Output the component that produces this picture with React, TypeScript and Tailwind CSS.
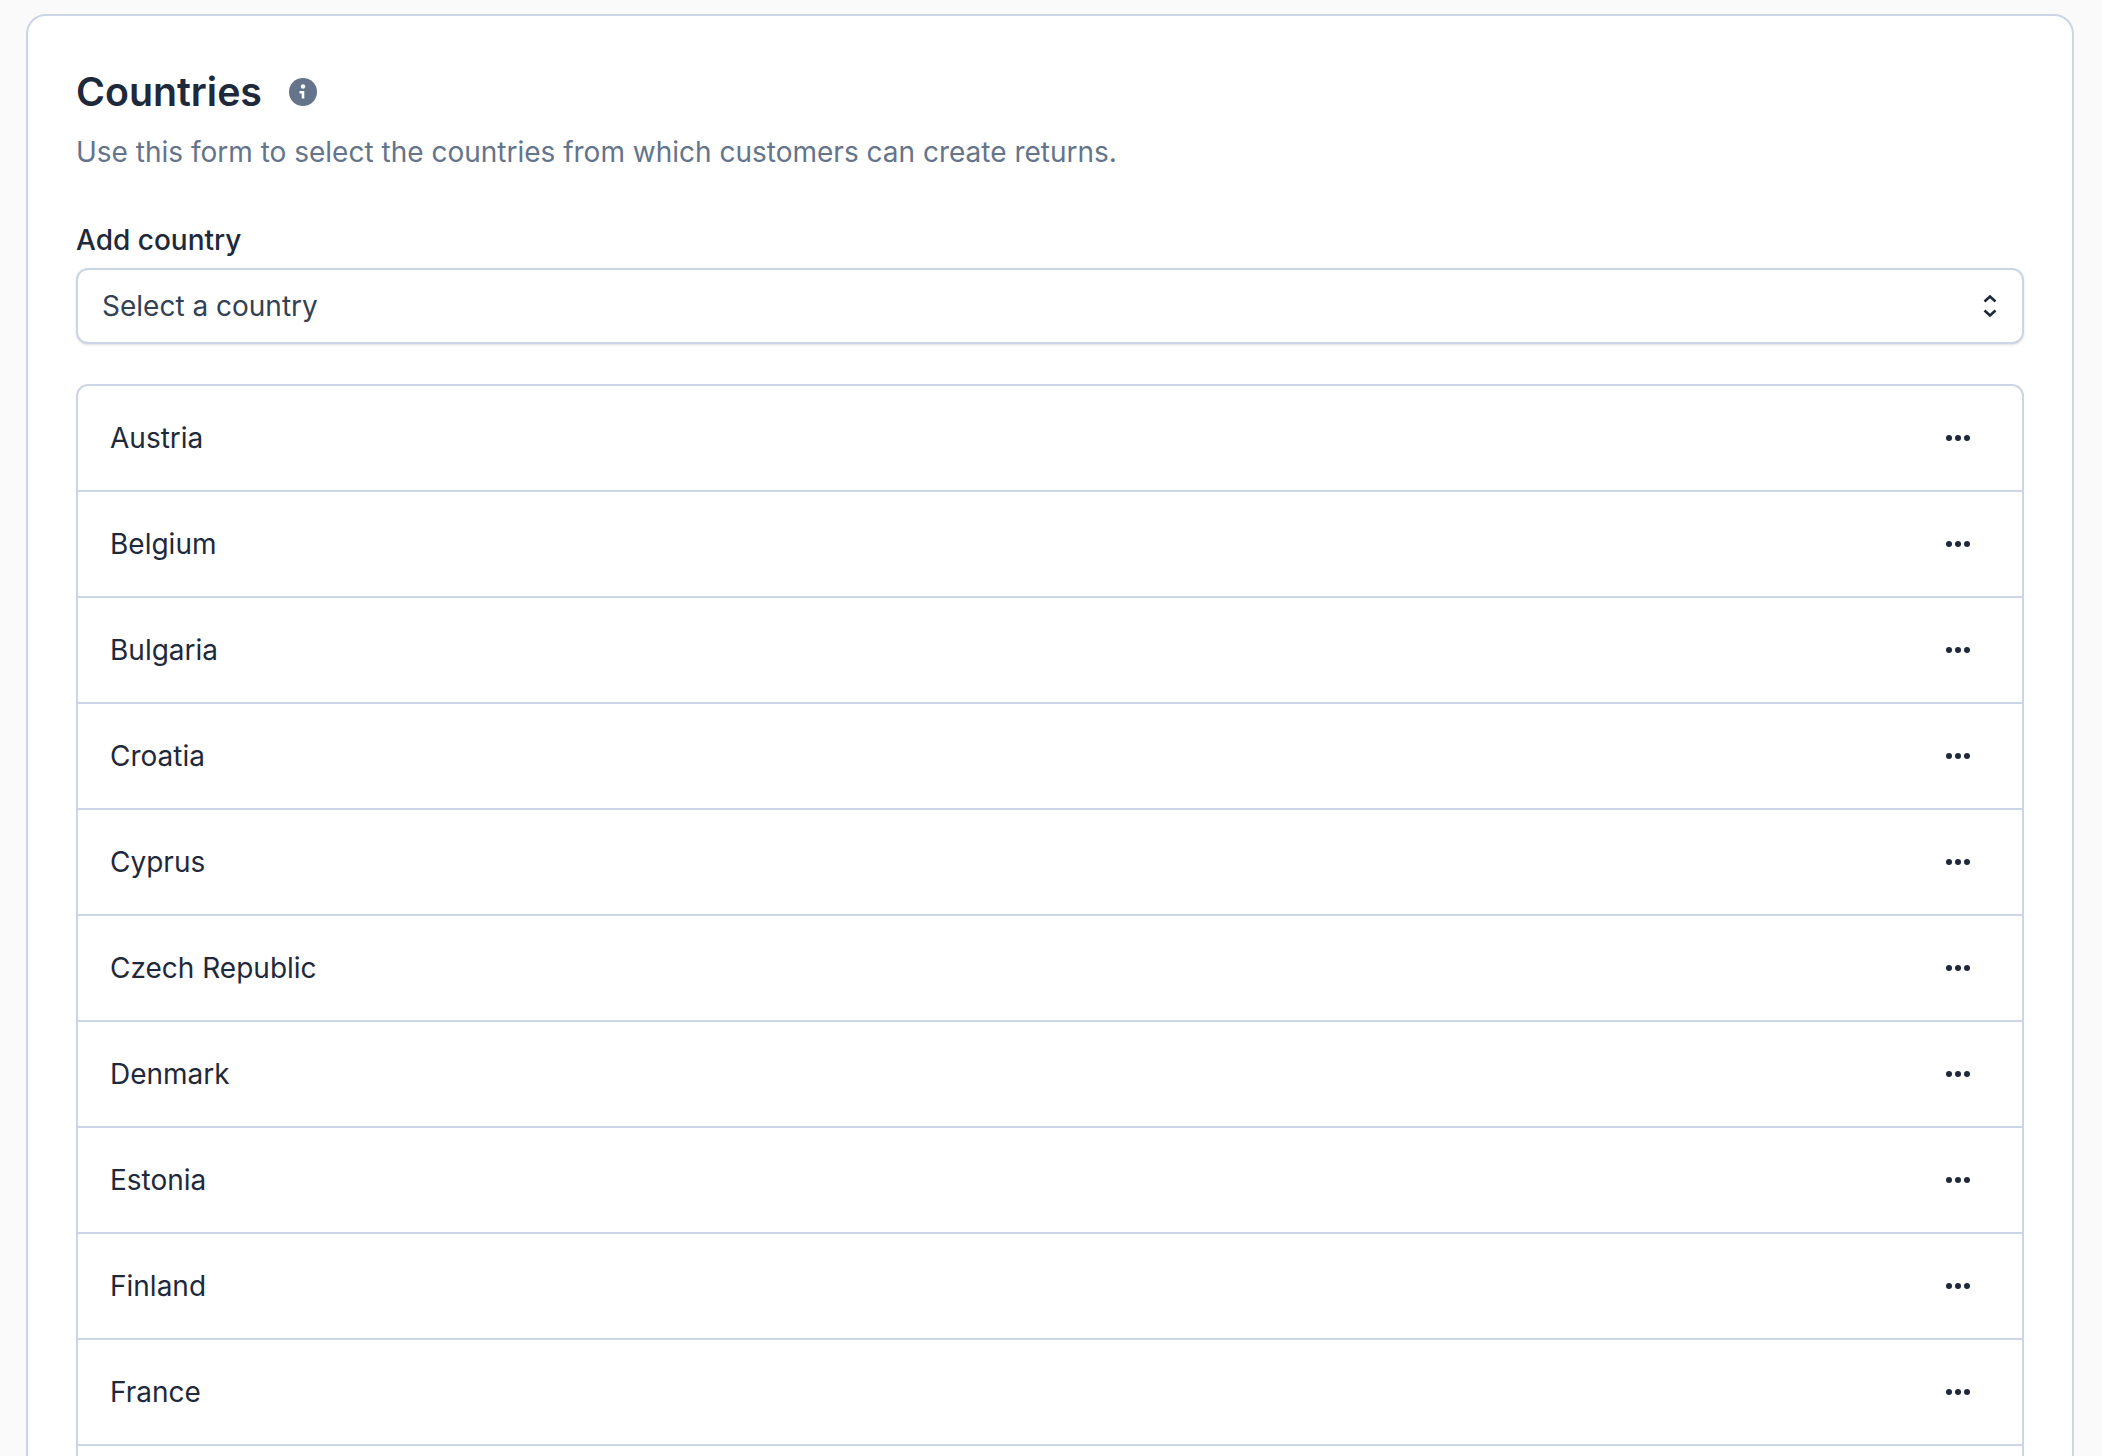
const countries = [
  "Austria",
  "Belgium",
  "Bulgaria",
  "Croatia",
  "Cyprus",
  "Czech Republic",
  "Denmark",
  "Estonia",
  "Finland",
  "France",
];

function InfoIcon() {
  return (
    <svg viewBox="0 0 28 28" className="h-7 w-7">
      <circle cx="14" cy="14" r="14" fill="#64748b" />
      <circle cx="14" cy="8.5" r="2.2" fill="#fff" />
      <path d="M10.5 13h4.8v7.5h-2.6v-5h-2.2z" fill="#fff" />
    </svg>
  );
}

function UpDownIcon() {
  return (
    <svg viewBox="0 0 14 24" className="h-6 w-[14px]" fill="none" stroke="#1e293b" strokeWidth="2.6">
      <path d="M1.5 7.5 7 2.5l5.5 5" />
      <path d="M1.5 16.5 7 21.5l5.5-5" />
    </svg>
  );
}

function DotsIcon() {
  return (
    <svg viewBox="0 0 24 6" className="h-[6px] w-6" fill="#1e293b">
      <circle cx="3" cy="3" r="3" />
      <circle cx="12" cy="3" r="3" />
      <circle cx="21" cy="3" r="3" />
    </svg>
  );
}

export default function App() {
  return (
    <div className="h-[1456px] overflow-hidden bg-[#fafafa] pt-[14px] pr-[28px] pl-[26px] font-['Inter',sans-serif]">
      <div className="rounded-[20px] border-2 border-[#cbd5e5] bg-white px-[48px] pt-[52px]">
        <div className="flex items-center gap-[27px]">
          <h1 className="text-[39.3px] leading-[48px] font-semibold text-[#1e293b]">Countries</h1>
          <InfoIcon />
        </div>
        <p className="mt-[16px] text-[28px] leading-[40px] text-[#64748b]">
          Use this form to select the countries from which customers can create returns.
        </p>

        <label className="mt-[48px] block text-[28px] leading-[40px] font-medium text-[#1e293b]">Add country</label>
        <div className="mt-[8px] flex h-[76px] items-center justify-between rounded-[12px] border-2 border-[#cbd5e5] bg-white pr-[25px] pl-[24px] shadow-sm">
          <span className="text-[28px] text-[#334155]">Select a country</span>
          <UpDownIcon />
        </div>

        <div className="mt-[40px] rounded-[12px] border-2 border-[#cbd5e5]">
          {countries.map((name, i) => (
            <div
              key={name}
              className={`flex items-center justify-between pr-[52px] pl-[32px] ${i > 0 ? "h-[106px] border-t-2 border-[#cbd5e5]" : "h-[104px]"}`}
            >
              <span className="text-[28px] text-[#1e293b]">{name}</span>
              <DotsIcon />
            </div>
          ))}
          <div className="h-[106px] border-t-2 border-[#cbd5e5]" />
        </div>
      </div>
    </div>
  );
}
